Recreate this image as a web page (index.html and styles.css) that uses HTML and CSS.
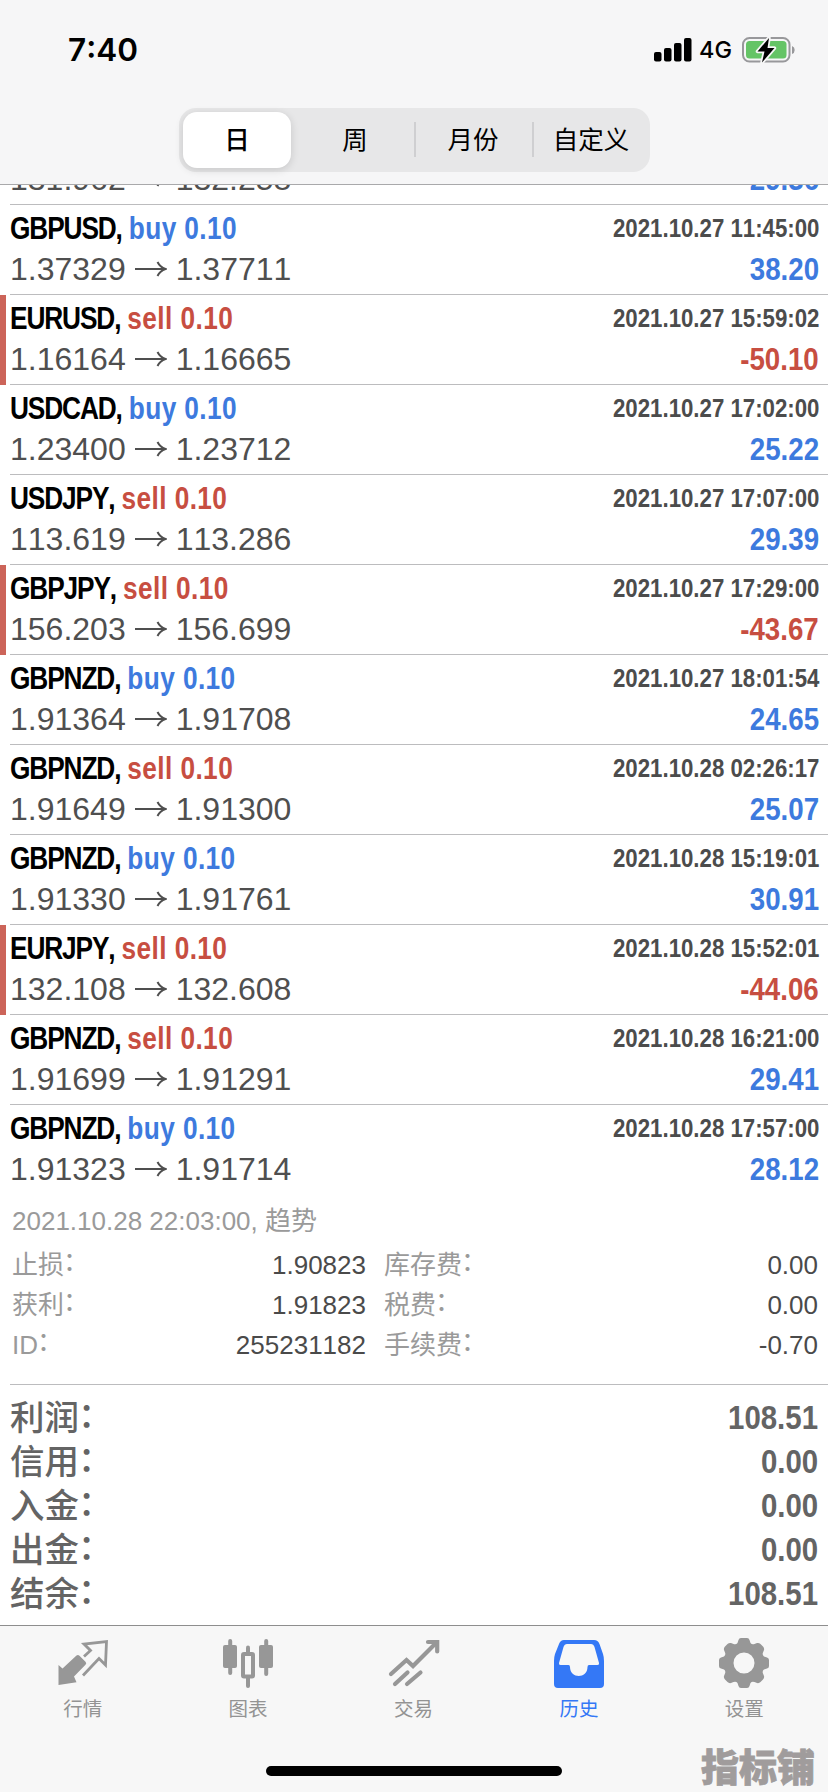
FILE: index.html
```html
<!DOCTYPE html>
<html lang="zh-CN">
<head>
<meta charset="utf-8">
<title>历史</title>
<link rel="stylesheet" href="styles.css">
</head>
<body>
<div class="screen">
  <header class="header">
    <div class="status">
      <span class="time">7:40</span>
      <div class="status-right">
        <svg class="signal" width="38" height="24" viewBox="0 0 38 24"><rect x="0" y="14" width="7.5" height="9.5" rx="2"/><rect x="10" y="10" width="7.5" height="13.5" rx="2"/><rect x="20" y="5" width="7.5" height="18.5" rx="2"/><rect x="30" y="0" width="7.5" height="23.5" rx="2"/></svg>
        <span class="net">4G</span>
        <svg class="battery" width="54" height="28" viewBox="0 0 54 28"><rect x="1" y="2" width="46.5" height="23.500" rx="6.500" fill="none" stroke="#98989b" stroke-width="2"/><rect x="4" y="5" width="40.500" height="17.500" rx="3.500" fill="#65c466"/><path d="M50 10v8q2.700-1 2.700-4t-2.700-4z" fill="#98989b"/><path d="M27 2L15.500 15.500H22.500L20 26.500L32.500 12H25.500Z" fill="#000" stroke="#f7f7f7" stroke-width="3.500" stroke-linejoin="round" paint-order="stroke"/></svg>
      </div>
    </div>
    <nav class="segments">
      <span class="seg seg-on">日</span>
      <span class="seg">周</span>
      <span class="seg seg-div">月份</span>
      <span class="seg seg-div">自定义</span>
    </nav>
  </header>

  <main class="content">
    <ul class="deals" id="deals"></ul>

    <section class="detail">
      <p class="opened">2021.10.28 22:03:00, 趋势</p>
      <dl class="grid">
        <dt>止损<i>：</i></dt><dd>1.90823</dd><dt>库存费<i>：</i></dt><dd>0.00</dd>
        <dt>获利<i>：</i></dt><dd>1.91823</dd><dt>税费<i>：</i></dt><dd>0.00</dd>
        <dt>ID<i>：</i></dt><dd>255231182</dd><dt>手续费<i>：</i></dt><dd>-0.70</dd>
      </dl>
    </section>

    <dl class="summary">
      <div><dt>利润<i>：</i></dt><dd>108.51</dd></div>
      <div><dt>信用<i>：</i></dt><dd>0.00</dd></div>
      <div><dt>入金<i>：</i></dt><dd>0.00</dd></div>
      <div><dt>出金<i>：</i></dt><dd>0.00</dd></div>
      <div><dt>结余<i>：</i></dt><dd>108.51</dd></div>
    </dl>
  </main>

  <footer class="tabbar">
    <nav class="tabs">
      <a class="tab">
        <svg width="52" height="52" viewBox="0 0 52 52"><path d="M19.500 18.500q1.500-1.300 3 .2l6 6q1.500 1.500 0 3L17 39.500l2.500 5.700L1.500 48V28l4 3.500z" fill="#979797"/><path d="M27 19.500L33.500 13.500L27 7L49.500 4.500L48.500 28L42 21.500L26 38.500" fill="none" stroke="#979797" stroke-width="2.800"/></svg>
        行情
      </a>
      <a class="tab">
        <svg width="52" height="52" viewBox="0 0 52 52" fill="#979797"><rect x="6.200" y="2" width="4" height="36" rx="2"/><rect x="1" y="8" width="14" height="23" rx="2"/><rect x="42.200" y="2" width="4" height="37" rx="2"/><rect x="37" y="8" width="14" height="23" rx="2"/><rect x="24" y="8.500" width="4" height="8" rx="2"/><rect x="24" y="38" width="4" height="13" rx="2"/><rect x="21" y="17" width="10" height="22.500" rx="1" fill="none" stroke="#979797" stroke-width="4"/></svg>
        图表
      </a>
      <a class="tab">
        <svg width="52" height="52" viewBox="0 0 52 52" fill="none" stroke="#979797" stroke-width="4.200" stroke-linecap="round" stroke-linejoin="miter"><path d="M3 37L18.500 23L25 29L48 6"/><path d="M40 5H49.200V14.500"/><path d="M7 47L19.500 35.500M19 47L32.500 35.500"/></svg>
        交易
      </a>
      <a class="tab tab-on">
        <svg width="52" height="52" viewBox="0 0 52 52"><path fill="#3478f6" fill-rule="evenodd" d="M11 3H41Q45 3 46.500 7L50 17Q51 20 51 24V47Q51 51 47 51H5Q1 51 1 47V24Q1 20 2 17L6 7Q7.500 3 11 3ZM14 7Q11.500 7 10.500 10L6 26Q5.500 28 7.500 28H15.500Q17 28 17 30C17 42 34.500 42 34.500 30Q34.500 28 36 28H44.500Q46.500 28 46 26L41.500 10Q40.500 7 38 7Z"/></svg>
        历史
      </a>
      <a class="tab">
        <svg width="52" height="52" viewBox="0 0 52 52"><path fill="#979797" fill-rule="evenodd" d="M20.500 3Q21 1 23 1H29Q31 1 31.500 3L32.500 6Q34 8 36.500 7L39 6Q41 5.500 42.500 7L45 9.500Q46.500 11 46 13L45 15.500Q44 18 46 19.500L49 20.500Q51 21 51 23V29Q51 31 49 31.500L46 32.500Q44 34 45 36.500L46 39Q46.500 41 45 42.500L42.500 45Q41 46.500 39 46L36.500 45Q34 44 32.500 46L31.500 49Q31 51 29 51H23Q21 51 20.500 49L19.500 46Q18 44 15.500 45L13 46Q11 46.500 9.500 45L7 42.500Q5.500 41 6 39L7 36.500Q8 34 6 32.500L3 31.500Q1 31 1 29V23Q1 21 3 20.500L6 19.500Q8 18 7 15.500L6 13Q5.500 11 7 9.500L9.500 7Q11 5.500 13 6L15.500 7Q18 8 19.500 6ZM26 15.500A10.500 10.500 0 1 0 26 36.500A10.500 10.500 0 1 0 26 15.500Z"/></svg>
        设置
      </a>
    </nav>
    <div class="home"></div>
    <span class="mark">指标铺</span>
  </footer>
</div>
<script src="deals.js"></script>
</body>
</html>
```
FILE: deals.js
```js
const deals = [
  ['EURJPY', 'buy', '131.962', '132.258', '2021.10.27 11:20:00', '29.36'],
  ['GBPUSD', 'buy', '1.37329', '1.37711', '2021.10.27 11:45:00', '38.20'],
  ['EURUSD', 'sell', '1.16164', '1.16665', '2021.10.27 15:59:02', '-50.10'],
  ['USDCAD', 'buy', '1.23400', '1.23712', '2021.10.27 17:02:00', '25.22'],
  ['USDJPY', 'sell', '113.619', '113.286', '2021.10.27 17:07:00', '29.39'],
  ['GBPJPY', 'sell', '156.203', '156.699', '2021.10.27 17:29:00', '-43.67'],
  ['GBPNZD', 'buy', '1.91364', '1.91708', '2021.10.27 18:01:54', '24.65'],
  ['GBPNZD', 'sell', '1.91649', '1.91300', '2021.10.28 02:26:17', '25.07'],
  ['GBPNZD', 'buy', '1.91330', '1.91761', '2021.10.28 15:19:01', '30.91'],
  ['EURJPY', 'sell', '132.108', '132.608', '2021.10.28 15:52:01', '-44.06'],
  ['GBPNZD', 'sell', '1.91699', '1.91291', '2021.10.28 16:21:00', '29.41'],
  ['GBPNZD', 'buy', '1.91323', '1.91714', '2021.10.28 17:57:00', '28.12'],
];
const arrow = '<svg class="arrow" width="32" height="18" viewBox="0 0 32 18"><path d="M0 9H30M22.500 2Q25 7 30.500 9Q25 11 22.500 16" fill="none" stroke="#4f4f4f" stroke-width="2"/></svg>';
document.getElementById('deals').innerHTML = deals.map(([sym, side, from, to, time, profit]) => {
  const loss = profit.startsWith('-');
  return `<li class="deal${loss ? ' deal-loss' : ''}">
    <div class="line top"><span class="name"><b class="sym">${sym},</b><b class="side ${side}">${side} 0.10</b></span><b class="when">${time}</b></div>
    <div class="line"><span class="prices">${from}${arrow}${to}</span><b class="profit ${loss ? 'sell' : 'buy'}">${profit}</b></div>
  </li>`;
}).join('');
```
FILE: styles.css
```css
* { box-sizing: border-box; margin: 0; padding: 0; }
body { background: #fff; font-family: "Liberation Sans", "Noto Sans CJK SC", sans-serif; font-kerning: none; }
i { font-style: normal; position: relative; top: -3px; left: -1px; }
.screen { width: 828px; height: 1792px; display: flex; flex-direction: column; overflow: hidden; background: #fff; }

.header { height: 185px; flex: none; background: #f6f6f7; border-bottom: 1px solid #a9a9ab; display: flex; flex-direction: column; }
.status { height: 108px; padding: 30px 32px 0 68px; display: flex; justify-content: space-between; align-items: flex-start; font-family: Inter, sans-serif; }
.time { font-size: 31.5px; line-height: 40px; font-weight: 600; }
.status-right { display: flex; align-items: flex-start; }
.signal { margin-top: 8px; }
.net { font-size: 23.500px; line-height: 40px; font-weight: 500; margin-left: 7px; width: 43px; }
.battery { margin-top: 6px; }
.segments { display: flex; width: 471px; height: 64px; margin-left: 179px; padding: 4px 0; background: #e7e7e8; border-radius: 17px; font-family: "Noto Sans CJK SC", sans-serif; font-size: 25.500px; }
.seg { flex: 1; display: flex; align-items: center; justify-content: center; position: relative; padding-bottom: 4px; line-height: 38px; }
.seg-on { flex: 0 0 108px; margin: 0 5px 0 4px; background: #fff; border-radius: 14px; box-shadow: 0 2px 8px rgba(0,0,0,.14); font-weight: 500; }
.seg-div::before { content: ""; position: absolute; left: 0; top: 10px; width: 2px; height: 35px; background: #cfcfd1; }

.content { height: 1440px; flex: none; overflow: hidden; }
.deals { list-style: none; margin-top: -70px; }
.deal { height: 90px; padding-left: 10px; border-left: 0 solid #cc6459; position: relative; }
.deal-loss { border-left-width: 6px; padding-left: 4px; }
.line { display: flex; justify-content: space-between; align-items: baseline; height: 41px; line-height: 36px; padding-right: 9px; }
.top { height: 46px; padding-top: 5px; }
.deal::after { content: ""; position: absolute; right: 0; bottom: 0; width: 818px; height: 1px; background: #bcbcbe; }
.deal:last-child::after { display: none; }

/* Condensed bold face */
.name, .when, .profit, .summary dd { display: block; font-weight: 700; font-size: 32px; white-space: nowrap; transform-origin: right; transform: scaleX(.865); }
.name { transform-origin: left; transform: scaleX(.82); }
.sym { letter-spacing: -1.350px; margin-right: 8.500px; }
.side { letter-spacing: .5px; }
.top .when { font-size: 26px; transform: translateY(-2px) scaleX(.855); color: #4c4c4c; }
.buy { color: #3d7ade; }
.sell { color: #c74e41; }
.prices { font-size: 32px; color: #4f4f4f; display: flex; align-items: baseline; }
.arrow { margin: 0 9px 0 9px; align-self: center; }

.detail { height: 189px; padding: 6px 10px 0 12px; font-size: 26px; }
.opened { color: #9a9a9a; line-height: 40px; height: 44px; }
.grid { display: grid; grid-template-columns: 120px 234px 110px 1fr; grid-auto-rows: 40px; line-height: 40px; }
.grid dt { color: #9a9a9a; white-space: nowrap; }
.grid dt:nth-of-type(even) { padding-left: 18px; }
.grid dd { text-align: right; color: #4a4a4a; }

.summary { margin-left: 10px; border-top: 1px solid #bcbcbe; padding: 8px 10px 0 0; }
.summary div { display: flex; justify-content: space-between; height: 44px; line-height: 44px; }
.summary dt { font-family: "Noto Sans CJK SC", sans-serif; font-size: 34.500px; font-weight: 500; color: #646464; }
.summary dd { color: #646464; font-size: 34px; padding-top: 2px; }

.tabbar { flex: none; height: 167px; background: #f7f7f7; border-top: 1px solid #8e8e8e; position: relative; }
.tabs { display: flex; padding: 11px 1px 0 0; }
.tab { flex: 1; display: flex; flex-direction: column; align-items: center; font-family: "Noto Sans CJK SC", sans-serif; font-size: 19.500px; line-height: 28px; gap: 5px; color: #939393; }
.tab-on { color: #3478f6; }
.home { position: absolute; left: 266px; top: 140px; width: 296px; height: 10px; border-radius: 5px; background: #000; }
.mark { position: absolute; right: 13px; bottom: 5px; font: 900 38px/44px "Noto Sans CJK SC", sans-serif; color: #a09c9c; -webkit-text-stroke: .8px #a09c9c; white-space: nowrap; }
```
